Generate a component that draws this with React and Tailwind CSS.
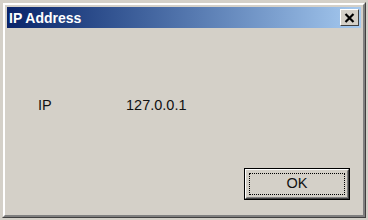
export default function App() {
  return (
    <div className="w-[368px] h-[220px] bg-[#d4d0c8] overflow-hidden" style={{ fontFamily: '"Liberation Sans", Arial, sans-serif' }}>
      <div className="ml-[2px] mt-[2px] w-[364px] h-[216px] border border-t-[#d4d0c8] border-l-[#d4d0c8] border-r-[#404040] border-b-[#404040]">
        <div className="w-full h-full border-2 border-t-white border-l-white border-r-[#808080] border-b-[#808080] p-[2px] flex flex-col">
          <div className="h-[21px] flex items-center justify-between pl-[2px] pr-[2px] bg-gradient-to-r from-[#0a246a] to-[#a6caf0]">
            <span className="text-white font-bold text-[14px] leading-none">IP Address</span>
            <div className="w-[19px] h-[17px] bg-[#d4d0c8] border border-t-white border-l-white border-r-[#404040] border-b-[#404040] flex items-center justify-center">
              <svg width="11" height="10" viewBox="0 0 11 10">
                <path d="M1.5 1 L9.5 9 M9.5 1 L1.5 9" stroke="#000" strokeWidth="2.2" />
              </svg>
            </div>
          </div>
          <div className="flex-1 relative flex flex-col">
            <div className="flex items-center mt-[70px] text-[14.5px] text-[#111] leading-none">
              <span className="ml-[31px] w-[88px]">IP</span>
              <span>127.0.0.1</span>
            </div>
            <div className="flex justify-end mt-auto mb-[13px] mr-[11px]">
              <div className="w-[106px] h-[32px] border border-black">
                <div className="w-full h-full border border-t-white border-l-white border-r-[#404040] border-b-[#404040]">
                  <div className="w-full h-full border border-t-[#d4d0c8] border-l-[#d4d0c8] border-r-[#808080] border-b-[#808080] p-[2px]">
                    <div className="w-full h-full border border-dotted border-black flex items-center justify-center text-[14.5px] text-[#111]">OK</div>
                  </div>
                </div>
              </div>
            </div>
          </div>
        </div>
      </div>
    </div>
  );
}
